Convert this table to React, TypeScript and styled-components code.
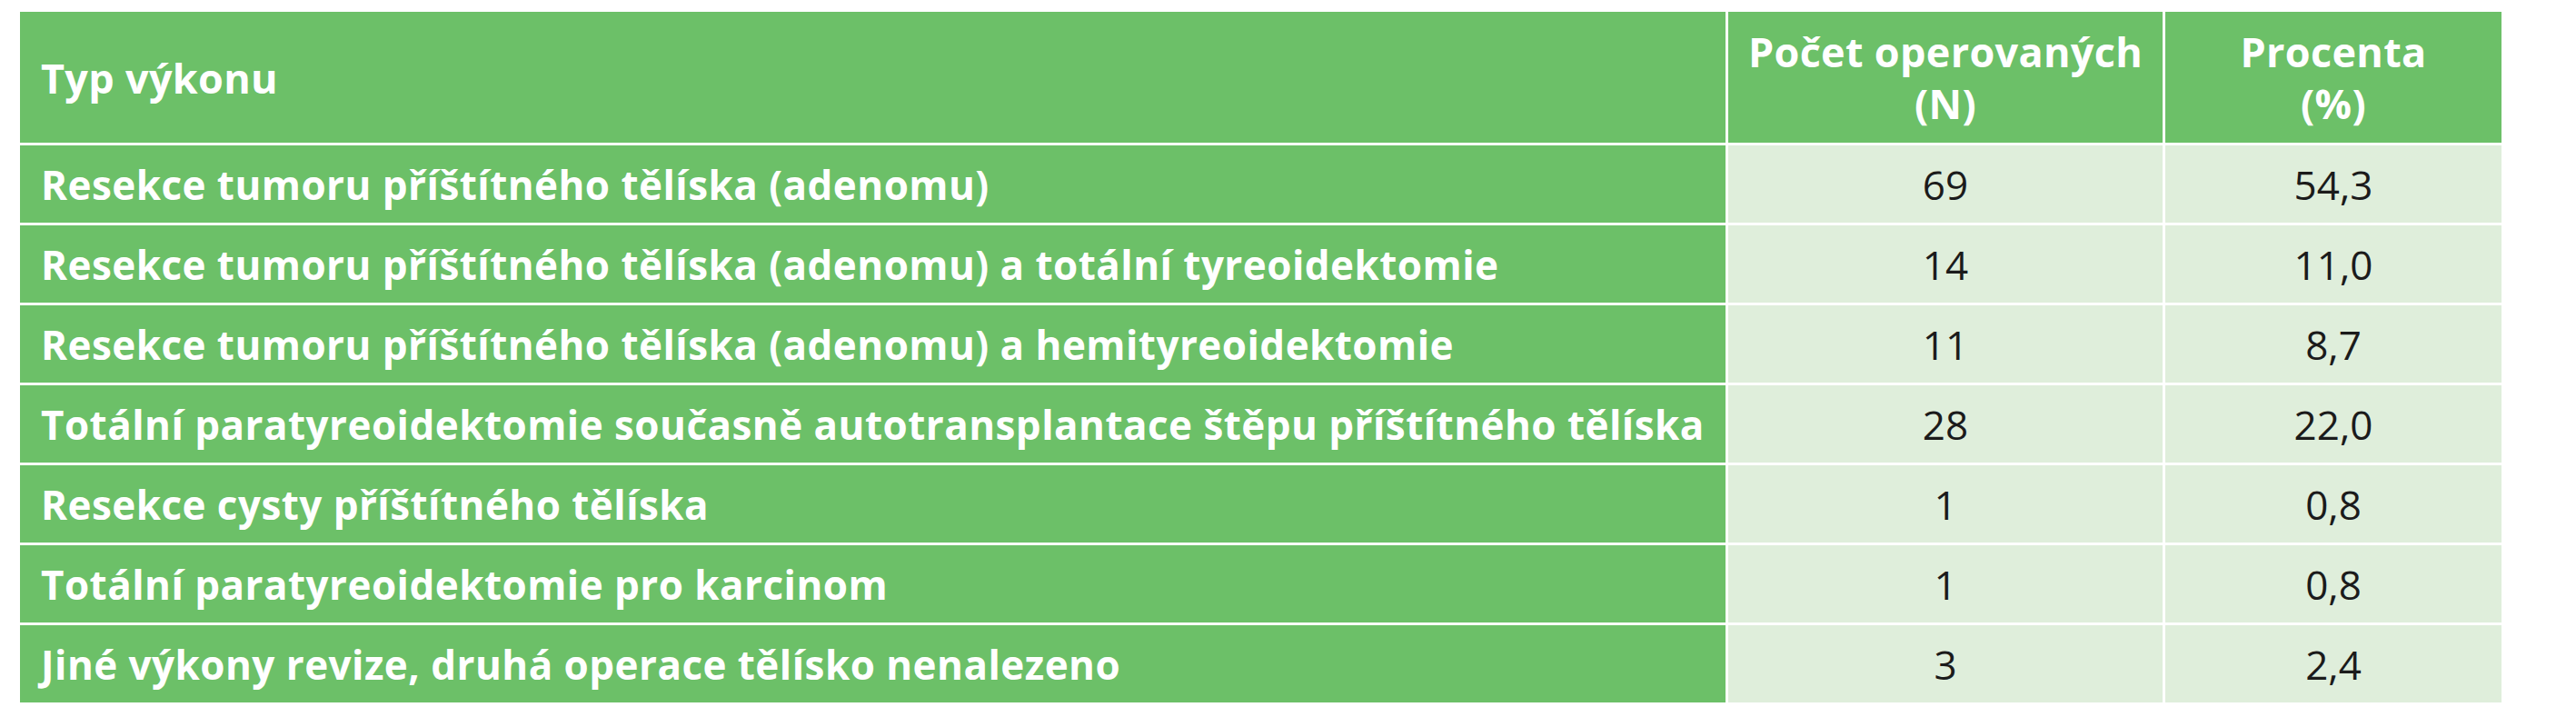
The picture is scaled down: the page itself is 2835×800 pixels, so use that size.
import styled, { createGlobalStyle } from "styled-components";

const green = "#6cc068";
const pale = "#dfeedb";

const rows = [
  { label: "Resekce tumoru příštítného tělíska (adenomu)", n: "69", pct: "54,3" },
  { label: "Resekce tumoru příštítného tělíska (adenomu) a totální tyreoidektomie", n: "14", pct: "11,0" },
  { label: "Resekce tumoru příštítného tělíska (adenomu) a hemityreoidektomie", n: "11", pct: "8,7" },
  { label: "Totální paratyreoidektomie současně autotransplantace štěpu příštítného tělíska", n: "28", pct: "22,0" },
  { label: "Resekce cysty příštítného tělíska", n: "1", pct: "0,8" },
  { label: "Totální paratyreoidektomie pro karcinom", n: "1", pct: "0,8" },
  { label: "Jiné výkony revize, druhá operace tělísko nenalezeno", n: "3", pct: "2,4" },
];

export default function App() {
  return (
    <>
      <GlobalStyle />
      <Page>
        <Table>
          <HeaderCell $align="left">Typ výkonu</HeaderCell>
          <HeaderCell $align="center">
            Počet operovaných
            <br />
            (N)
          </HeaderCell>
          <HeaderCell $align="center">
            Procenta
            <br />
            (%)
          </HeaderCell>

          {rows.map((r) => (
            <Row key={r.label}>
              <LabelCell>{r.label}</LabelCell>
              <ValueCell>{r.n}</ValueCell>
              <ValueCell>{r.pct}</ValueCell>
            </Row>
          ))}
        </Table>
      </Page>
    </>
  );
}

const GlobalStyle = createGlobalStyle`
  html, body {
    margin: 0;
    padding: 0;
    background: #ffffff;
  }
  body {
    font-family: "Open Sans", "Noto Sans", "DejaVu Sans", sans-serif;
  }
`;

const Page = styled.div`
  width: 2835px;
  height: 800px;
  padding: 13px 0 0 22px;
  box-sizing: border-box;
  background: #fff;
`;

const Table = styled.div`
  display: grid;
  grid-template-columns: 1877px 478px 370px;
  grid-template-rows: 144px;
  grid-auto-rows: 85px;
  gap: 3px;
  width: 2731px;
  background: #fff;
`;

// rows only group cells for readability, the grid places them
const Row = styled.div`
  display: contents;
`;

const HeaderCell = styled.div<{ $align: "left" | "center" }>`
  background: ${green};
  color: #fff;
  font-weight: 700;
  font-size: 45px;
  line-height: 57px;
  letter-spacing: 0.3px;
  display: flex;
  align-items: center;
  justify-content: ${({ $align }) => ($align === "left" ? "flex-start" : "center")};
  text-align: ${({ $align }) => $align};
  padding: 0 23px;
  box-sizing: border-box;
  white-space: nowrap;
`;

const LabelCell = styled.div`
  background: ${green};
  color: #fff;
  font-weight: 700;
  font-size: 44px;
  letter-spacing: 0.45px;
  display: flex;
  align-items: center;
  padding: 0 23px;
  white-space: nowrap;
`;

const ValueCell = styled.div`
  background: ${pale};
  color: #1b1b1b;
  font-weight: 400;
  font-size: 44px;
  display: flex;
  align-items: center;
  justify-content: center;
`;
